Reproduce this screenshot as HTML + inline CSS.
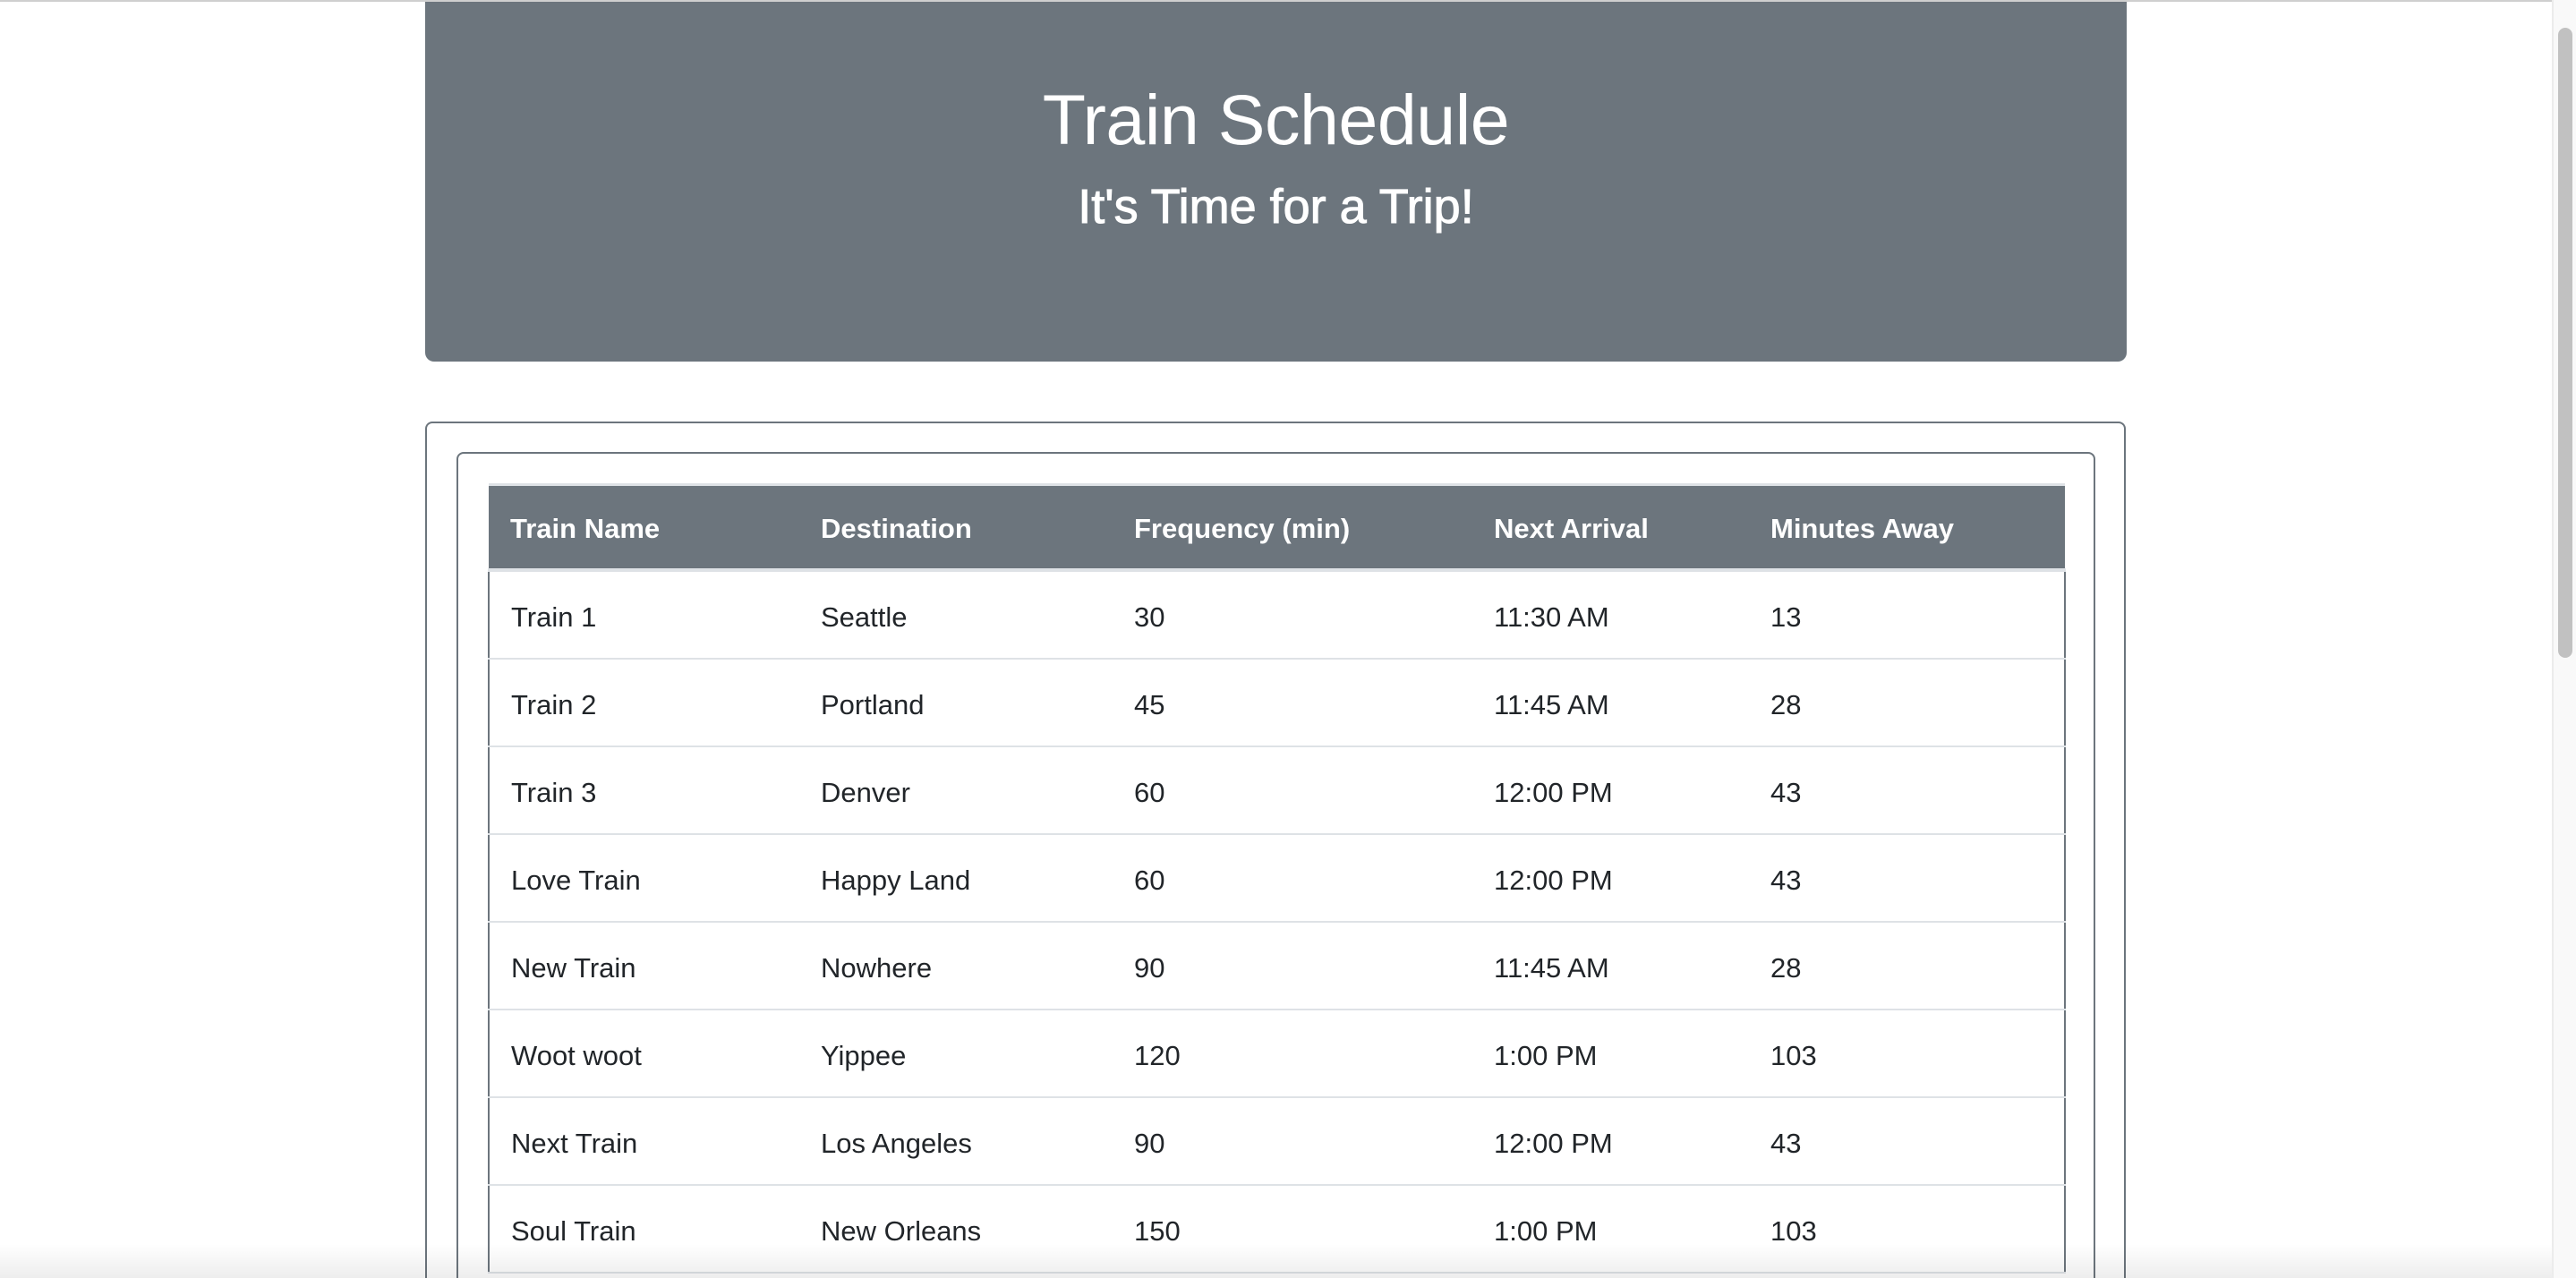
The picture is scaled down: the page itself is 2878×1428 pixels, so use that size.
<!DOCTYPE html>
<html><head><style>
html,body{margin:0;padding:0;width:2878px;height:1428px;overflow:hidden;background:#fff;font-family:"Liberation Sans",Arial,sans-serif;}
#wrap{position:relative;width:2878px;height:1428px;overflow:hidden;}
.topline{position:absolute;left:0;top:0;width:2851px;height:2px;background:#cfcfcf;}
.jumbo{position:absolute;left:475px;top:2px;width:1901px;height:402px;background:#6c757d;border-radius:0 0 10px 10px;color:#fff;text-align:center;}
.jumbo h1{margin:0;position:absolute;left:0;right:0;top:84px;font-size:79px;font-weight:400;line-height:96px;letter-spacing:-0.5px;}
.jumbo h2{margin:0;position:absolute;left:0;right:0;top:196px;font-size:54px;font-weight:400;line-height:66px;-webkit-text-stroke:1px #fff;}
.outer{position:absolute;left:475px;top:471px;width:1900px;height:957px;border:2px solid #6c757d;border-bottom:none;border-radius:8px 8px 0 0;box-sizing:border-box;}
.inner{position:absolute;left:510px;top:505px;width:1831px;height:923px;border:2px solid #6c757d;border-bottom:none;border-radius:8px 8px 0 0;box-sizing:border-box;}
table{position:absolute;left:545px;top:540px;width:1763px;border-collapse:collapse;font-size:31px;color:#212529;}
th{background:#6c757d;color:#fff;text-align:left;font-weight:700;height:88px;padding:4px 0 0 24px;border-top:3px solid #dee2e6;border-bottom:4px solid #dee2e6;}
td{height:90px;padding:6px 0 0 24px;border-bottom:2px solid #dee2e6;}
tbody tr td:first-child{border-left:2px solid #6c757d;}
tbody tr td:last-child{border-right:2px solid #6c757d;}
.c1{width:323px}.c2{width:326px}.c3{width:378px}.c4{width:285px}
.sb{position:absolute;left:2851px;top:0;width:27px;height:1428px;background:#f9f9f9;border-left:2px solid #ececec;box-sizing:border-box;}
.thumb{position:absolute;left:2858px;top:31px;width:16px;height:704px;background:#c1c1c1;border-radius:8px;}
.shade{position:absolute;left:0;top:1390px;width:2851px;height:38px;background:linear-gradient(rgba(0,0,0,0),rgba(0,0,0,0.07));}
</style></head><body><div id="wrap">
<div class="topline"></div>
<div class="jumbo"><h1>Train Schedule</h1><h2>It's Time for a Trip!</h2></div>
<div class="outer"></div>
<div class="inner"></div>
<table>
<thead><tr><th class="c1">Train Name</th><th class="c2">Destination</th><th class="c3">Frequency (min)</th><th class="c4">Next Arrival</th><th>Minutes Away</th></tr></thead>
<tbody>
<tr><td>Train 1</td><td>Seattle</td><td>30</td><td>11:30 AM</td><td>13</td></tr>
<tr><td>Train 2</td><td>Portland</td><td>45</td><td>11:45 AM</td><td>28</td></tr>
<tr><td>Train 3</td><td>Denver</td><td>60</td><td>12:00 PM</td><td>43</td></tr>
<tr><td>Love Train</td><td>Happy Land</td><td>60</td><td>12:00 PM</td><td>43</td></tr>
<tr><td>New Train</td><td>Nowhere</td><td>90</td><td>11:45 AM</td><td>28</td></tr>
<tr><td>Woot woot</td><td>Yippee</td><td>120</td><td>1:00 PM</td><td>103</td></tr>
<tr><td>Next Train</td><td>Los Angeles</td><td>90</td><td>12:00 PM</td><td>43</td></tr>
<tr><td>Soul Train</td><td>New Orleans</td><td>150</td><td>1:00 PM</td><td>103</td></tr>
</tbody></table>
<div class="sb"></div><div class="thumb"></div>
<div class="shade"></div>
</div></body></html>
